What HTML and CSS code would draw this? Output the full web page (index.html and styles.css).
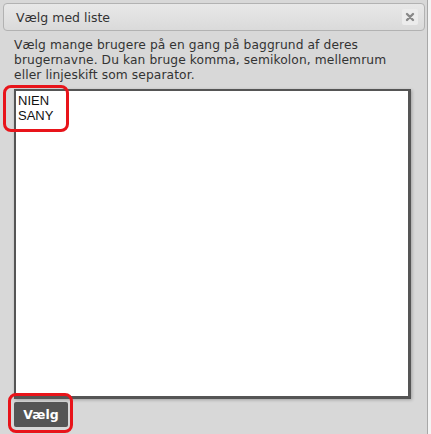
FILE: index.html
```html
<!DOCTYPE html>
<html lang="da">
<head>
  <meta charset="UTF-8" />
  <title>Vælg med liste</title>
  <link rel="stylesheet" href="styles.css">
</head>
<body>
  <div class="dialog">
    <div class="titlebar">
      <span class="title">Vælg med liste</span>
      <button class="luk" title="Luk">
        <svg width="10" height="10" viewBox="0 0 10 10">
          <path d="M2 2 L8 8 M8 2 L2 8" stroke="#888" stroke-width="2.4" stroke-linecap="round"/>
        </svg>
      </button>
    </div>

    <div class="indhold">
      <p class="hjaelp">Vælg mange brugere på en gang på baggrund af deres brugernavne. Du kan bruge komma, semikolon, mellemrum eller linjeskift som separator.</p>
      <div class="felt">
        <textarea class="liste">NIEN
SANY</textarea>
        <div class="markering markering-tekst"></div>
      </div>
      <div class="knapper">
        <button class="vaelg">Vælg</button>
        <div class="markering markering-knap"></div>
      </div>
    </div>
  </div>
</body>
</html>
```

FILE: styles.css
```css
body {
  margin: 0;
  padding: 0;
  background: #f4f4f4;
  font-family: "DejaVu Sans", Verdana, sans-serif;
}

.dialog {
  width: 428px;
  height: 434px;
  background: #d8d8d8;
  border-right: 1px solid #a8a8a8;
  padding-top: 3px;
  box-sizing: border-box;
}

.titlebar {
  margin: 0 2px 0 3px;
  height: 28px;
  border: 1px solid #b2b2b2;
  border-radius: 4px;
  background: linear-gradient(#e8e8e8, #dadada);
  display: flex;
  align-items: center;
  justify-content: space-between;
  padding: 0 6px 0 12px;
  box-sizing: border-box;
}

.title {
  font-size: 12.5px;
  color: #333;
}

.luk {
  width: 16px;
  height: 16px;
  padding: 0;
  border: none;
  border-radius: 2px;
  background: #ececec;
  display: flex;
  align-items: center;
  justify-content: center;
}

.indhold {
  padding: 7px 14px 0 14px;
}

.hjaelp {
  margin: 0 0 6px;
  padding-right: 12px;
  font-size: 12.25px;
  letter-spacing: 0.1px;
  line-height: 15px;
  color: #333;
}

.felt {
  position: relative;
}

.liste {
  display: block;
  width: 397px;
  height: 310px;
  margin: 0;
  padding: 2px 2px;
  box-sizing: border-box;
  border: 2px solid #555;
  border-right-width: 3px;
  border-bottom-width: 3px;
  box-shadow: 1px 1px 3px rgba(0,0,0,0.25);
  background: #fff;
  font-family: "Liberation Sans", Arial, sans-serif;
  font-size: 13px;
  line-height: 15px;
  color: #111;
  resize: none;
  outline: none;
}

.knapper {
  position: relative;
  padding-top: 3px;
}

.vaelg {
  width: 54px;
  height: 25px;
  border: none;
  border-radius: 2px;
  background: #555;
  color: #fff;
  font-family: "DejaVu Sans", Verdana, sans-serif;
  font-weight: bold;
  font-size: 12.5px;
  padding: 0;
}

/* røde markeringer */
.markering {
  position: absolute;
  border: 3px solid #e8141a;
  border-radius: 8px;
  pointer-events: none;
}

.markering-tekst {
  left: -11px;
  top: -4px;
  width: 60px;
  height: 41px;
}

.markering-knap {
  left: -6px;
  top: -6px;
  width: 59px;
  height: 34px;
}
```
